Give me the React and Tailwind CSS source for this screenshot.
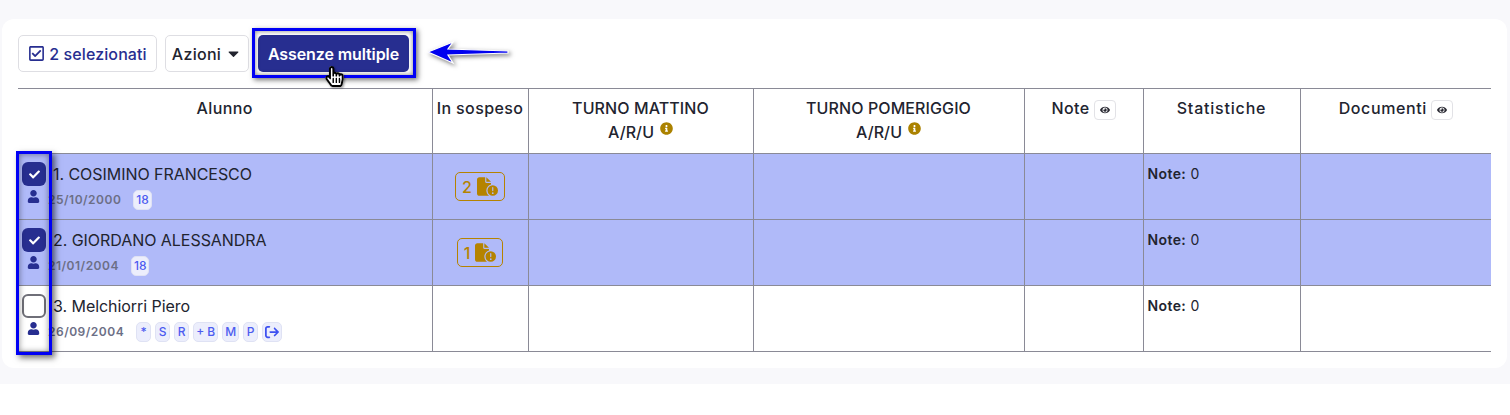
import { FaCaretDown, FaCheck, FaEye, FaInfoCircle, FaRegCheckSquare, FaUser, FaHandPointer, FaRegHandPointer } from 'react-icons/fa';
import { FaArrowRightFromBracket, FaFileCircleExclamation } from 'react-icons/fa6';

const rows = [
  { n: '1. COSIMINO FRANCESCO', date: '25/10/2000', badges: ['18'], checked: true, pending: 2 },
  { n: '2. GIORDANO ALESSANDRA', date: '21/01/2004', badges: ['18'], checked: true, pending: 1 },
  { n: '3. Melchiorri Piero', date: '26/09/2004', badges: ['*', 'S', 'R', '+ B', 'M', 'P'], exit: true, checked: false },
];

const Badge = ({ children }) => (
  <span className="flex h-[20px] min-w-[15px] items-center justify-center rounded-[5px] border border-[#dfe2f4] bg-[#eceefc] px-[2px] text-[12px] font-medium text-[#4c5cf0]">
    {children}
  </span>
);

const EyeButton = () => (
  <span className="ml-1 inline-flex h-[20px] w-[22px] items-center justify-center rounded-[4px] border border-[#e2e2e6] bg-white align-middle text-[#2a2a33]">
    <FaEye className="text-[10px]" />
  </span>
);

const Info = () => <FaInfoCircle className="ml-[6px] inline-block align-[3px] text-[13px] text-[#ab8200]" />;

const th = 'border border-[#8a8a96] first:border-l-0 last:border-r-0 align-top px-1 pt-[7px] text-center text-[16px] font-medium leading-[24px] tracking-[0.4px] text-[#22242f]';
const td = 'border border-[#8a8a96] first:border-l-0 last:border-r-0 align-top p-0';

export default function App() {
  return (
    <div className="h-[415px] w-[1510px] bg-white font-['Inter',sans-serif]">
      <div className="h-[384px] bg-[#f8f8fb] pr-[3px] pl-[2px] pt-[19px]">
        <div className="relative h-[349px] rounded-[12px] bg-white pl-[16px] pt-[16px]">
          <div className="flex h-[37px] items-center">
            <button className="flex h-[37px] w-[139px] items-center justify-center gap-[4px] rounded-[5px] border border-[#dedee3] bg-white text-[16px] font-medium tracking-[0.1px] text-[#272e90]">
              <FaRegCheckSquare className="text-[17px]" />
              2 selezionati
            </button>
            <button className="ml-[8px] flex h-[37px] w-[84px] items-center justify-center gap-[4px] rounded-[5px] border border-[#dedee3] bg-white text-[16px] font-medium tracking-[0.3px] text-[#22242f]">
              Azioni <FaCaretDown className="text-[17px]" />
            </button>
            <button className="ml-[9px] h-[37px] w-[151px] rounded-[5px] bg-[#272e90] text-[16px] font-semibold tracking-[-0.1px] text-white">
              Assenze multiple
            </button>
          </div>

          <table className="mt-[16px] w-[1473px] table-fixed border-collapse">
            <colgroup>
              <col className="w-[414px]" />
              <col className="w-[96px]" />
              <col className="w-[225px]" />
              <col className="w-[271px]" />
              <col className="w-[119px]" />
              <col className="w-[157px]" />
              <col className="w-[191px]" />
            </colgroup>
            <thead>
              <tr className="h-[65px]">
                <th className={th}>Alunno</th>
                <th className={`${th} !px-0`}>In sospeso</th>
                <th className={`${th} !tracking-[0.1px]`}>TURNO MATTINO<br />A/R/U<Info /></th>
                <th className={`${th} !tracking-[0.1px]`}>TURNO POMERIGGIO<br />A/R/U<Info /></th>
                <th className={th}>Note<EyeButton /></th>
                <th className={`${th} !tracking-[0.8px]`}>Statistiche</th>
                <th className={`${th} !tracking-[0.6px]`}>Documenti<EyeButton /></th>
              </tr>
            </thead>
            <tbody>
              {rows.map((r) => (
                <tr key={r.n} className={`h-[66px] ${r.checked ? 'bg-[#b0baf9]' : 'bg-white'}`}>
                  <td className={td}>
                    <div className="flex pl-[4px] pt-[8px]">
                      <div className="flex w-[24px] shrink-0 flex-col items-center">
                        {r.checked ? (
                          <span className="flex h-[24px] w-[24px] items-center justify-center rounded-[6px] bg-[#272e90] text-white">
                            <FaCheck className="text-[11px]" />
                          </span>
                        ) : (
                          <span className="h-[24px] w-[24px] rounded-[6px] border-2 border-[#6f6f78] bg-white" />
                        )}
                        <FaUser className="mt-[4px] mr-[2px] text-[13px] text-[#272e90]" />
                      </div>
                      <div className="min-w-0">
                        <div className="ml-[7px] text-[16px] leading-[24px] tracking-[-0.05px] text-[#22242f]">{r.n}</div>
                        <div className="mt-[4px] ml-[2px] flex items-center">
                          <span className="mr-[12px] shrink-0 text-[12px] font-semibold tracking-[0.5px] text-[#6c6f86]">{r.date}</span>
                          <div className="flex gap-[4px]">
                            {r.badges.map((b) => (
                              <Badge key={b}>{b}</Badge>
                            ))}
                            {r.exit && (
                              <Badge>
                                <FaArrowRightFromBracket className="text-[14px] text-[#3d50f0]" />
                              </Badge>
                            )}
                          </div>
                        </div>
                      </div>
                    </div>
                  </td>
                  <td className={td}>
                    {r.pending && (
                      <div className="flex justify-center pt-[18px]">
                        <span className="flex h-[29px] items-center gap-[5px] rounded-[5px] border border-[#b58300] px-[6px] text-[16px] font-medium text-[#b58300]">
                          {r.pending}
                          <FaFileCircleExclamation className="text-[21px]" />
                        </span>
                      </div>
                    )}
                  </td>
                  <td className={td} />
                  <td className={td} />
                  <td className={td} />
                  <td className={td}>
                    <div className="pl-[4px] pt-[11px] text-[14px] leading-[18px] tracking-[0.4px] text-[#22242f]">
                      <span className="font-semibold">Note:</span> 0
                    </div>
                  </td>
                  <td className={td} />
                </tr>
              ))}
            </tbody>
          </table>

          {/* annotazioni sopra lo screenshot */}
          <div className="pointer-events-none absolute top-[9px] left-[250px] h-[50px] w-[164px] border-[3px] border-[#0000f5] shadow-[2px_2px_5px_rgba(0,0,0,0.55),inset_0_0_5px_rgba(0,0,0,0.5)]" />
          <div className="pointer-events-none absolute top-[132px] left-[14px] h-[204px] w-[36px] border-[3px] border-[#0000f5] shadow-[3px_3px_6px_rgba(0,0,0,0.55),inset_0_0_6px_rgba(0,0,0,0.45)]" />
          <svg className="absolute top-[20px] left-[415px] overflow-visible" width="96" height="30" viewBox="0 0 96 30">
            <polygon
              points="11,13 36,3 31,10 91,12 91,14 31,16 36,24"
              fill="#0000f0"
              stroke="#ffffff"
              strokeWidth="1.2"
              style={{ filter: 'drop-shadow(2px 2px 2px rgba(0,0,0,0.5))' }}
            />
          </svg>
          <div className="absolute top-[47px] left-[322px] h-[22px] w-[19px] text-[21px] drop-shadow-[1px_1px_1px_rgba(0,0,0,0.4)]">
            <FaHandPointer className="absolute inset-0 text-white" />
            <FaRegHandPointer className="absolute inset-0 text-black" />
          </div>
        </div>
      </div>
    </div>
  );
}
